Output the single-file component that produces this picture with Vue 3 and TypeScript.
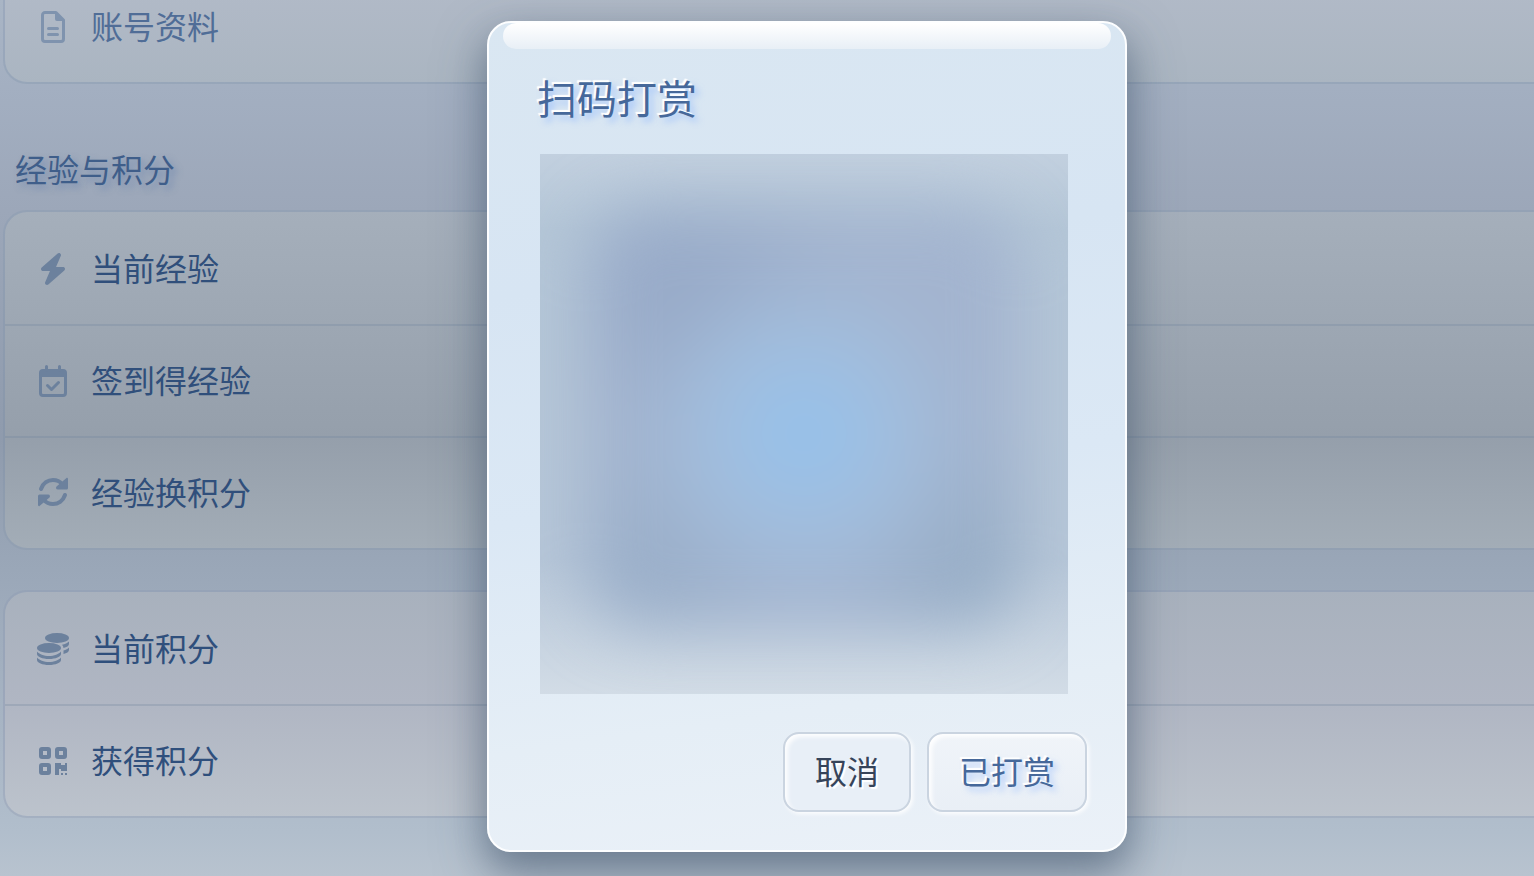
<script setup lang="ts">
interface Row {
  icon: string
  label: string
}

interface Group {
  name: string
  title: string
  rows: Row[]
}

const groups: Group[] = [
  { name: 'profile', title: '', rows: [{ icon: 'file', label: '账号资料' }] },
  {
    name: 'exp',
    title: '经验与积分',
    rows: [
      { icon: 'bolt', label: '当前经验' },
      { icon: 'calendar', label: '签到得经验' },
      { icon: 'rotate', label: '经验换积分' },
    ],
  },
  {
    name: 'points',
    title: '',
    rows: [
      { icon: 'coins', label: '当前积分' },
      { icon: 'qrcode', label: '获得积分' },
    ],
  },
]
</script>

<template>
  <div class="screen">
    <main class="page">
      <section v-for="g in groups" :key="g.name" :class="['group', g.name]">
        <h2 v-if="g.title" class="heading">{{ g.title }}</h2>
        <div class="card">
          <div v-for="r in g.rows" :key="r.label" class="row">
            <svg v-if="r.icon === 'file'" class="icon" viewBox="0 0 32 32" aria-hidden="true">
              <path class="line" d="M8 1.5h11l7.500 7.500V28a2.500 2.500 0 0 1-2.500 2.500H8A2.500 2.500 0 0 1 5.500 28V4A2.500 2.500 0 0 1 8 1.500z" />
              <path d="M18 1v7a2 2 0 0 0 2 2h7z" />
              <path class="line" d="M11.500 17.500h9M11.500 23.500h9" />
            </svg>
            <svg v-else-if="r.icon === 'bolt'" class="icon" viewBox="-32 0 512 512" aria-hidden="true">
              <path d="M349.4 44.6c5.900-13.700 1.500-29.700-10.600-38.500s-28.600-8-39.900 1.800l-256 224c-10 8.800-13.600 22.900-8.900 35.300S50.700 288 64 288H175.500L98.600 467.400c-5.900 13.700-1.500 29.700 10.600 38.500s28.600 8 39.900-1.800l256-224c10-8.800 13.600-22.900 8.900-35.300s-16.600-20.700-30-20.700H272.500L349.400 44.600z" />
            </svg>
            <svg v-else-if="r.icon === 'calendar'" class="icon" viewBox="0 0 32 32" aria-hidden="true">
              <path fill-rule="evenodd" d="M6 4h20a4 4 0 0 1 4 4v20a4 4 0 0 1-4 4H6a4 4 0 0 1-4-4V8a4 4 0 0 1 4-4zM5 12v16a1 1 0 0 0 1 1h20a1 1 0 0 0 1-1V12z" />
              <path class="line" d="M9.500 1.500v4M22.500 1.500v4M10.500 20.500l4 4 7-7" />
            </svg>
            <svg v-else-if="r.icon === 'rotate'" class="icon" viewBox="0 0 32 32" aria-hidden="true">
              <path class="arc" d="M4 12C6 6 11 3 16 3c4 0 7 1.500 9 4M28 18c-2 6-7 9-12 9-4 0-7-1.500-9-4" />
              <path d="M31 2v9a1.500 1.500 0 0 1-1.500 1.500H21c-2 0-2.500-2-1.500-3L29.500 1C30 .5 31 1 31 2zM1 28v-9a1.500 1.500 0 0 1 1.500-1.500H11c2 0 2.500 2 1.500 3L2.500 29C2 29.500 1 29 1 28z" />
            </svg>
            <svg v-else-if="r.icon === 'coins'" class="icon" viewBox="0 0 32 32" aria-hidden="true">
              <ellipse cx="20" cy="5" rx="12" ry="5" />
              <ellipse cx="12" cy="15" rx="12" ry="5" />
              <path d="M0 18.500c2 2.700 7 4.500 12 4.500s10-1.800 12-4.500V21c0 2.800-5.400 5-12 5S0 23.800 0 21zM0 24.500c2 2.700 7 4.500 12 4.500s10-1.800 12-4.500V27c0 2.800-5.400 5-12 5S0 29.800 0 27z" />
              <path d="M25 11.800c3-.7 5.500-1.700 7-3.300V11c0 1.800-2.200 3.200-5.500 4.100-.1-1.200-.6-2.300-1.500-3.300zM26.500 17.500c2.300-.7 4.300-1.700 5.500-3V17c0 1.800-2.200 3.200-5.500 4.100z" />
            </svg>
            <svg v-else class="icon" viewBox="0 0 32 32" aria-hidden="true">
              <path fill-rule="evenodd" d="M5 2h6a3 3 0 0 1 3 3v6a3 3 0 0 1-3 3H5a3 3 0 0 1-3-3V5a3 3 0 0 1 3-3zm1 4v4h4V6zM21 2h6a3 3 0 0 1 3 3v6a3 3 0 0 1-3 3h-6a3 3 0 0 1-3-3V5a3 3 0 0 1 3-3zm1 4v4h4V6zM5 18h6a3 3 0 0 1 3 3v6a3 3 0 0 1-3 3H5a3 3 0 0 1-3-3v-6a3 3 0 0 1 3-3zm1 4v4h4v-4z" />
              <path d="M18 18h6v2h4v-2h2v8h-6v-2h-2v6h-4zM24 28h2v2h-2zM28 28h2v2h-2z" />
            </svg>
            <span class="label">{{ r.label }}</span>
          </div>
        </div>
      </section>
    </main>

    <div class="mask">
      <section class="dialog" role="dialog" aria-modal="true" aria-labelledby="dialog-title">
        <h1 id="dialog-title" class="title">扫码打赏</h1>
        <div class="picture" role="img" aria-label="收款码">
          <div class="core"></div>
        </div>
        <footer class="actions">
          <button type="button" class="btn">取消</button>
          <button type="button" class="btn primary">已打赏</button>
        </footer>
      </section>
    </div>
  </div>
</template>

<style>
html,
body {
  margin: 0;
  overflow: hidden;
}
</style>

<style scoped>
.screen {
  position: relative;
  height: 100vh;
  overflow: hidden;
  font-family: "Noto Sans CJK SC", sans-serif;
  background: linear-gradient(180deg, #a9b5c5 0%, #a3afc1 10%, #9ca7b9 24%, #8f9bad 50%, #9aa7b8 65%, #b1becc 95%, #b8c3cf 100%);
}

/* The page and the mask run past the right edge of the window */
.page {
  width: calc(100% + 80px);
  box-sizing: border-box;
  padding: 0 4px 0 3px;
}

.card {
  border: 2px solid rgba(110, 132, 168, 0.3);
  border-radius: 24px;
  overflow: hidden;
}

.row {
  display: flex;
  align-items: center;
  gap: 22px;
  height: 112px;
  box-sizing: border-box;
  padding: 2px 32px 0;
}

.row + .row {
  padding-top: 0;
  border-top: 2px solid rgba(110, 132, 158, 0.28);
}

.icon {
  width: 32px;
  height: 32px;
  flex: none;
  fill: #6c819d;
}

.line,
.arc {
  fill: none;
  stroke: #6c819d;
  stroke-width: 3;
  stroke-linecap: round;
  stroke-linejoin: round;
}

.arc {
  stroke-width: 4;
}

.label {
  padding-bottom: 4px;
  font-size: 32px;
  line-height: 48px;
  color: #2f4f7c;
}

.profile {
  margin-top: -32px;
}

.profile .card {
  background: linear-gradient(180deg, #b3bbc9, #aab5c1) border-box;
}

.profile .label {
  color: #506d97;
}

.profile .icon {
  fill: #7f93ae;
}

.profile .line {
  stroke: #7f93ae;
}

.exp .card {
  background: linear-gradient(180deg, #a5afbb 0%, #9da7b3 34%, #959fab 67%, #a3adb7 100%) border-box;
}

.exp .label {
  color: #304f7b;
}

.points {
  margin-top: 40px;
}

.points .card {
  background: linear-gradient(180deg, #a8b1bd 0%, #b0b6c3 50%, #bcc3cc 100%) border-box;
}

.heading {
  margin: 0;
  padding: 60px 12px 18px;
  font-size: 32px;
  line-height: 48px;
  font-weight: 400;
  color: #3f5e8a;
  text-shadow: 4px 4px 6px rgba(90, 120, 170, 0.5);
}

.mask {
  position: absolute;
  inset: 0 -80px 0 0;
  display: flex;
  align-items: center;
  justify-content: center;
}

.dialog {
  position: relative;
  width: 640px;
  margin-bottom: 3px;
  box-sizing: border-box;
  padding: 46px 38px 38px 48px;
  border: 2px solid #fdfeff;
  border-radius: 24px;
  background: linear-gradient(172deg, #dae7f2 0%, #d7e5f3 30%, #dbe8f5 55%, #e5eef6 80%, #ebf1f8 100%);
  box-shadow: 0 20px 50px rgba(65, 85, 110, 0.5), 0 16px 32px rgba(65, 85, 110, 0.3);
}

.dialog::before {
  content: "";
  position: absolute;
  top: 0;
  left: 14px;
  right: 14px;
  height: 26px;
  border-radius: 14px;
  background: linear-gradient(180deg, #ffffff, #e8eff6);
}

.title {
  margin: 0 0 29px;
  font-size: 40px;
  line-height: 56px;
  font-weight: 400;
  color: #46689a;
  text-shadow: -2px -2px 1px #ffffff, 4px 4px 6px rgba(130, 175, 255, 0.6);
}

.picture {
  display: grid;
  height: 540px;
  margin: 0 19px 38px 3px;
  overflow: hidden;
  background: linear-gradient(180deg, #c2d0df 0%, #b4c6d7 14%, #b6c6d8 75%, #d2dce6 100%);
}

.core {
  margin: 54px 46px 68px;
  border-radius: 60px;
  filter: blur(32px);
  background:
    radial-gradient(circle at 50% 54%, #93c1ec 0, #9bc0e6 50px, #a2bddc 100px, rgba(164, 184, 211, 0) 170px),
    radial-gradient(circle at 20% 18%, #96a9c7 0, rgba(150, 169, 199, 0) 170px),
    radial-gradient(circle at 92% 88%, #96adc5 0, rgba(150, 173, 197, 0) 150px),
    radial-gradient(circle at 12% 88%, #99aec8 0, rgba(153, 174, 200, 0) 150px),
    #a3b4cf;
}

.actions {
  display: flex;
  justify-content: flex-end;
  gap: 16px;
}

.btn {
  height: 80px;
  box-sizing: border-box;
  padding: 0 30px 4px;
  border: 2px solid #cad4e0;
  border-radius: 16px;
  background: #e8eff7;
  font-family: inherit;
  font-size: 32px;
  line-height: 48px;
  color: #36445a;
  text-shadow: 2px 2px 1px #ffffff;
  box-shadow: inset 3px 3px 4px rgba(255, 255, 255, 0.9), 2px 2px 4px rgba(255, 255, 255, 0.9);
}

.primary {
  color: #46689a;
  background: linear-gradient(180deg, #f0f4f9, #e9eff6);
  text-shadow: -2px -2px 1px #ffffff, 4px 4px 6px rgba(130, 175, 255, 0.6);
}
</style>
